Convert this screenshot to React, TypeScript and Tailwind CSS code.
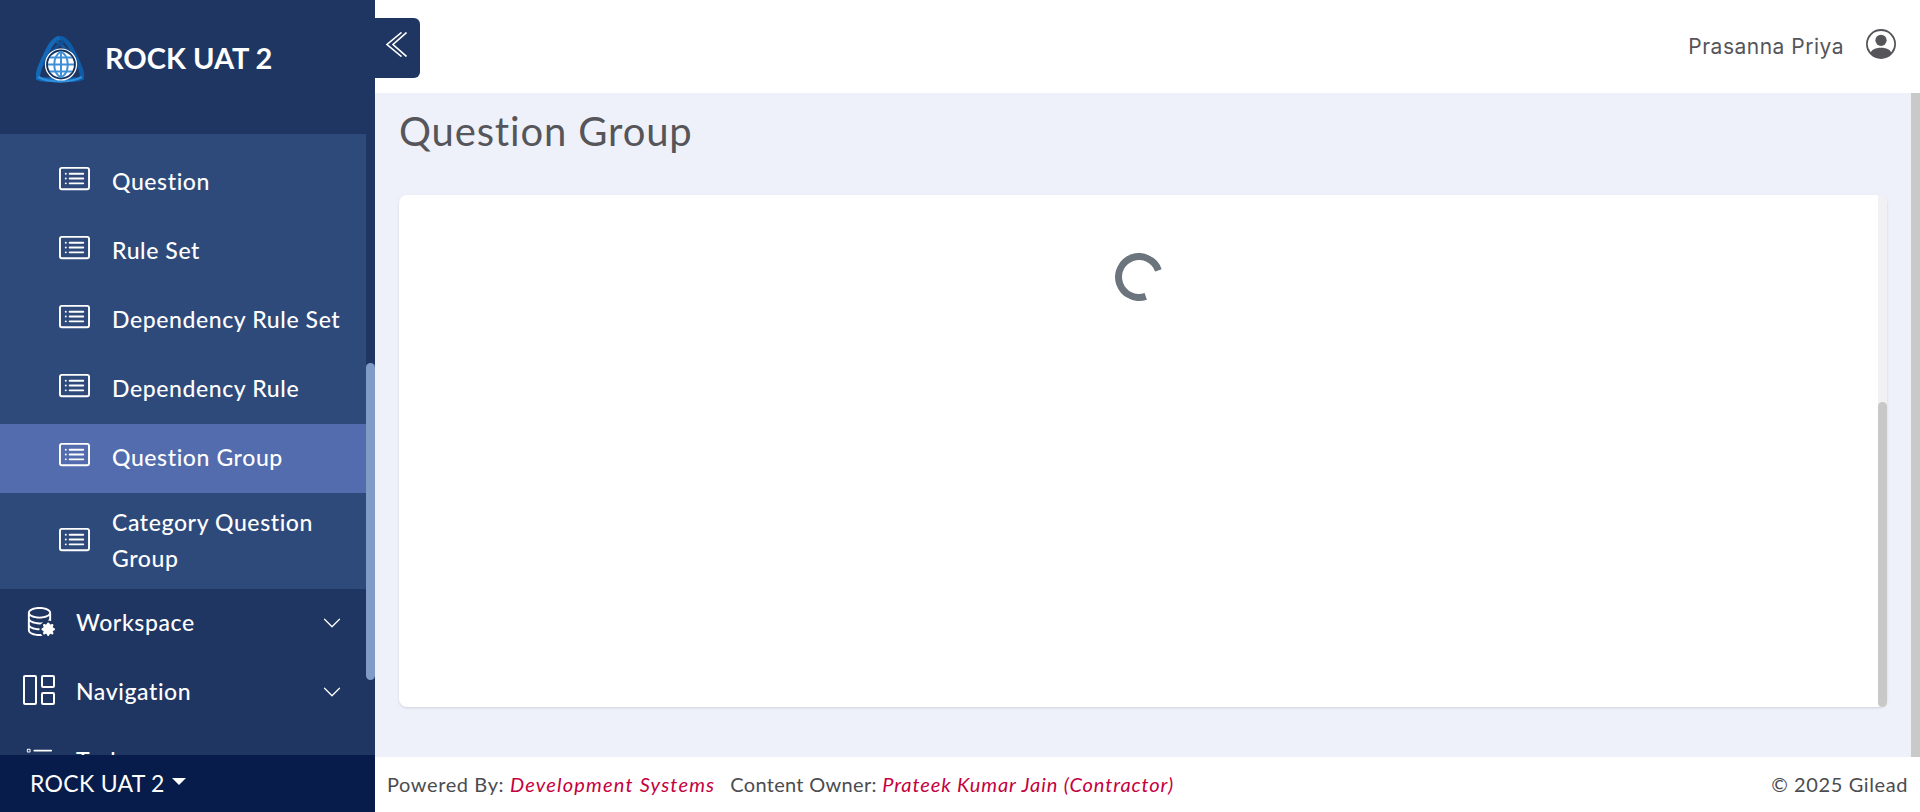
import { BsCardList, BsChevronDown, BsDatabaseGear, BsListTask, BsPersonCircle } from "react-icons/bs";

const sans = "font-['Lato','Noto_Sans',sans-serif]";

function Logo() {
  return (
    <svg viewBox="0 0 48 47" className="w-[48px] h-[47px]" fill="none">
      <path d="M24 2 C32 3 36 14 41 24 C44 31 47 37 46 42 C38 46 30 42 24 44" stroke="#0f5ba6" strokeWidth="4.5" />
      <path d="M24 2 C16 3 12 14 7 24 C4 31 1 37 2 42 C10 46 18 42 24 44" stroke="#1468b8" strokeWidth="4.5" />
      <path d="M20 5 C28 10 34 16 40 28" stroke="#17579f" strokeWidth="3" />
      <path d="M28 5 C20 10 14 16 8 28" stroke="#0f4f96" strokeWidth="3" />
      <path d="M2 41 C14 47 34 47 46 41" stroke="#2f8fdc" strokeWidth="2.5" />
      <circle cx="25" cy="28.5" r="15.5" fill="#16335f" stroke="#ffffff" strokeWidth="1.2" />
      <circle cx="25" cy="28.5" r="13" fill="#ffffff" />
      <g stroke="#3d8fd6" strokeWidth="2">
        <path d="M12 28.5 H38 M14 21.5 H36 M14 35.5 H36 M25 15.5 V41.5" />
        <path d="M25 15.5 C16 20.5 16 36.5 25 41.5 M25 15.5 C34 20.5 34 36.5 25 41.5" />
      </g>
    </svg>
  );
}

function SubItem({ label, active = false }: { label: string; active?: boolean }) {
  return (
    <div className={`flex items-center h-[69px] pl-[59px] pr-4 ${active ? "bg-[#526cae]" : ""}`}>
      <BsCardList className="w-[31px] h-[31px] shrink-0 text-white -mt-[8px]" />
      <span className="ml-[22px] -mt-[4px] text-[23px] leading-[36px] tracking-[0.6px] font-medium text-white">{label}</span>
    </div>
  );
}

function NavItem({ icon, label }: { icon: React.ReactNode; label: string }) {
  return (
    <div className="flex items-center h-[69px] pb-[2px] pl-[23px] pr-[33px] shrink-0">
      <div className="w-[32px] h-[32px] -mt-[4px] flex items-center justify-center text-white shrink-0">{icon}</div>
      <span className="ml-[21px] text-[23px] tracking-[0.6px] font-medium text-white flex-1">{label}</span>
      <BsChevronDown className="w-[20px] h-[20px] text-white" />
    </div>
  );
}

export default function App() {
  return (
    <div className={`relative flex h-screen w-full overflow-hidden bg-white ${sans}`}>
      <aside className="relative w-[375px] shrink-0 flex flex-col bg-[#1f3662]">
        <div className="h-[134px] shrink-0 flex items-start pl-[36px] pt-[36px]">
          <Logo />
          <span className="ml-[21px] mt-[4px] text-[29px] leading-[36px] font-bold text-white">ROCK UAT 2</span>
        </div>
        <div className="relative flex-1 min-h-0 overflow-hidden">
          <div className="mr-[9px] pt-[14px] bg-[#2e4a7b]">
            <SubItem label="Question" />
            <SubItem label="Rule Set" />
            <SubItem label="Dependency Rule Set" />
            <SubItem label="Dependency Rule" />
            <SubItem label="Question Group" active />
            <div className="flex items-center h-[96px] pl-[59px] pr-4">
              <BsCardList className="w-[31px] h-[31px] shrink-0 text-white -mt-[3px]" />
              <span className="ml-[22px] -mt-[3px] text-[23px] leading-[36px] tracking-[0.6px] font-medium text-white">
                Category Question
                <br />
                Group
              </span>
            </div>
          </div>
          <NavItem icon={<BsDatabaseGear className="w-[31px] h-[31px]" />} label="Workspace" />
          <NavItem
            icon={
              <svg viewBox="0 0 32 30" className="w-[32px] h-[30px]" fill="none" stroke="currentColor" strokeWidth="2">
                <rect x="1" y="1" width="12" height="28" rx="1" />
                <rect x="19" y="1" width="12" height="11" rx="1" />
                <rect x="19" y="18" width="12" height="11" rx="1" />
              </svg>
            }
            label="Navigation"
          />
          <NavItem icon={<BsListTask className="w-[30px] h-[30px]" />} label="Tasks" />
          <div className="absolute right-0 top-[229px] w-[9px] h-[317px] rounded-[5px] bg-[#7f9bc6]" />
        </div>
        <div className="h-[57px] shrink-0 flex items-center pl-[30px] bg-[#071c4a] text-white text-[23px] tracking-[0.3px]">
          <span>ROCK UAT 2</span>
          <span className="ml-[7px] mb-[4px] w-0 h-0 border-x-[7px] border-x-transparent border-t-[7px] border-t-white" />
        </div>
      </aside>

      <div className="flex-1 min-w-0 flex flex-col">
        <header className="h-[93px] shrink-0 bg-white flex items-start justify-end pt-[34px] pr-[24px]">
          <span className="font-['Inter',sans-serif] text-[21px] leading-[26px] tracking-[0.5px] text-[#55555a]">Prasanna Priya</span>
          <BsPersonCircle className="ml-[22px] -mt-[5px] w-[30px] h-[30px] text-[#55555a]" />
        </header>
        <main className="flex-1 min-h-0 flex bg-[#eef1f9]">
          <div className="flex-1 min-w-0 flex flex-col pl-[24px] pr-[24px]">
            <h1 className="h-[102px] shrink-0 pt-[15px] text-[40px] leading-[46px] tracking-[0.85px] text-[#55555a]">Question Group</h1>
            <div className="relative h-[512px] rounded-[8px] bg-white shadow-sm flex justify-center pt-[58px] pr-[9px]">
              <div className="w-[48px] h-[48px] rounded-full border-[7px] border-[#6c757d] border-r-transparent rotate-[26deg]" />
              <div className="absolute right-0 top-0 bottom-0 w-[9px] bg-[#f1f1f3] rounded-r-[8px]">
                <div className="absolute right-0 top-[207px] bottom-0 w-[9px] rounded-[5px] bg-[#c8c8c8]" />
              </div>
            </div>
          </div>
          <div className="w-[9px] shrink-0 bg-[#c9c9c9]" />
        </main>
        <footer className="h-[55px] shrink-0 pb-[2px] bg-white flex items-center justify-between pl-[12px] pr-[12px] text-[20px] tracking-[0.3px] text-[#4c4c4f]">
          <div>
            <span className="tracking-[0.6px]">Powered By: </span>
            <em className="tracking-[1.2px] text-[#c5003e]">Development Systems</em>
            <span className="ml-[15px]">Content Owner: </span>
            <em className="tracking-[0.9px] text-[#c5003e]">Prateek Kumar Jain (Contractor)</em>
          </div>
          <span className="tracking-[0.6px]">© 2025 Gilead</span>
        </footer>
      </div>

      <button className="absolute left-[375px] top-[18px] w-[45px] h-[60px] rounded-r-[6px] bg-[#1f3662] flex items-center justify-center">
        <svg viewBox="0 0 21 25" className="w-[21px] h-[25px] -ml-[3px] -mt-[7px]" fill="none" stroke="#ffffff" strokeWidth="1.6">
          <path d="M15.5 0.5 L1 12.5 L15.5 24.5" />
          <path d="M20.5 0.5 L7 12.5 L20.5 24.5" />
        </svg>
      </button>
    </div>
  );
}
